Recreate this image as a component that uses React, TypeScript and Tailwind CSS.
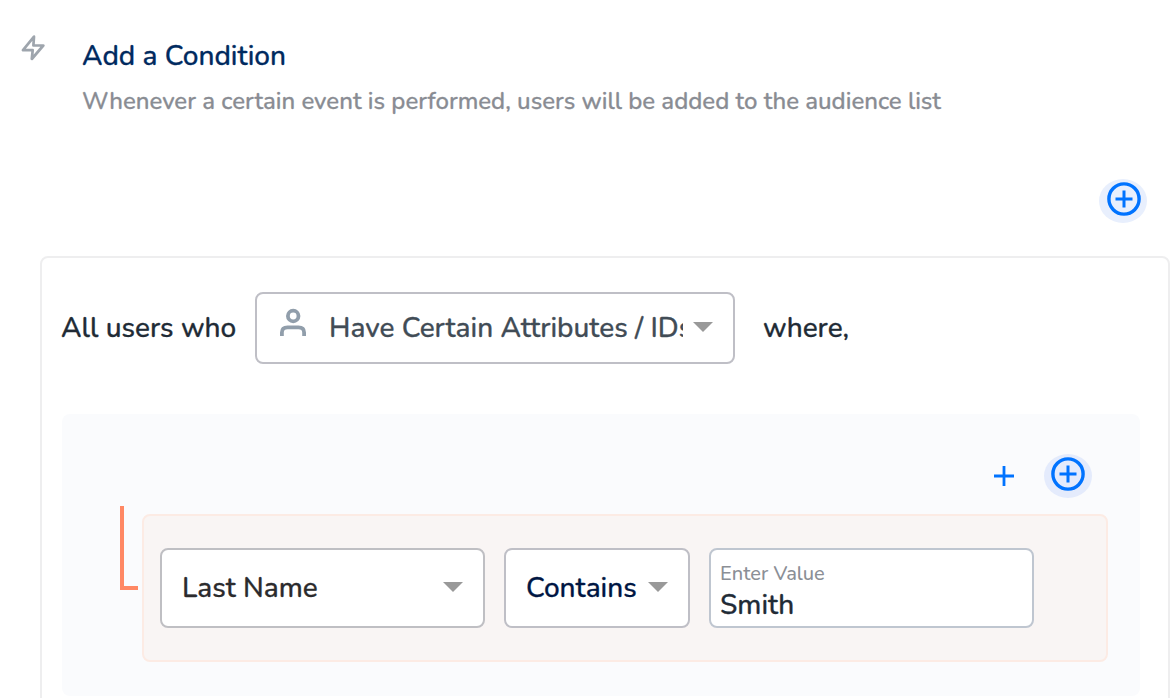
import type { ReactNode } from 'react';

function Caret() {
  return (
    <svg className="mb-0.5 block h-[10px] w-5 shrink-0" viewBox="0 0 20 10">
      <path d="M0 0H20L10 10Z" fill="#999999" />
    </svg>
  );
}

function AddButton({ className }: { className: string }) {
  return (
    <button className={`flex h-11 w-12 shrink-0 justify-center rounded-[50%] pt-[3px] ${className}`}>
      <svg className="block h-[34px] w-[34px]" viewBox="0 0 34 34" fill="none" stroke="#0073ff">
        <circle cx="17" cy="17" r="15.1" strokeWidth="3.4" />
        <path d="M17 8.5V25.5M8.5 17H25.5" strokeWidth="3" />
      </svg>
    </button>
  );
}

function Field({ className, children }: { className: string; children: ReactNode }) {
  return <div className={`flex shrink-0 rounded-lg border-2 bg-white ${className}`}>{children}</div>;
}

export default function App() {
  return (
    <main className="flex h-[698px] w-[1170px] flex-col overflow-hidden bg-white font-['Nunito','Lato',sans-serif] text-[28px] leading-9 font-medium whitespace-nowrap text-[#212b36] [-webkit-text-stroke:0.3px]">
      <header className="flex h-[179px] shrink-0 pl-[21px]">
        <svg className="mt-[35px] block h-[26px] w-6 shrink-0" viewBox="0 0 24 26" fill="none" stroke="#9ea5ad" strokeWidth="2.7" strokeLinejoin="round">
          <path d="M13 1.7L2 15.2H11.7L10.8 24L22.3 10.5H12.4Z" />
        </svg>
        <div className="pt-[38px] pl-[37px]">
          <h1 className="text-[#002a5f]">Add a Condition</h1>
          <p className="mt-[9px] text-2xl leading-9 text-[#898c93]">
            Whenever a certain event is performed, users will be added to the audience list
          </p>
        </div>
      </header>

      <div className="flex h-[77px] shrink-0 justify-end pr-[23px]">
        <AddButton className="bg-[#e8effd] pl-px" />
      </div>

      <section className="ml-10 h-[460px] shrink-0 rounded-lg border-2 border-[#eeeeef] px-5 pt-[34px]">
        <div className="flex h-[72px] items-center">
          <span className="-ml-px w-[194px]">All users who</span>
          <Field className="h-[72px] w-[480px] items-center border-[#bfbfc6] pr-5 pl-[22px]">
            <svg className="mb-[11px] block h-[30px] w-7 shrink-0" viewBox="0 0 28 30" fill="none" stroke="#919eab" strokeWidth="3.8">
              <circle cx="14.2" cy="8" r="5.3" />
              <path d="M2.9 28V24.5Q2.9 19.3 8.6 19.3H19.4Q25.1 19.3 25.1 24.5V28" strokeLinecap="butt" />
            </svg>
            <span className="ml-[22px] w-[354px] overflow-hidden text-[#414c56]">Have Certain Attributes / IDs</span>
            <span className="ml-[10px]"><Caret /></span>
          </Field>
          <span className="ml-7">where,</span>
        </div>

        <div className="mt-[50px] mr-2 h-[282px] rounded-lg bg-[#fafbfd] pt-10">
          <div className="flex h-[52px] items-start justify-end pr-12">
            <svg className="mt-3 mr-[30px] block h-5 w-5" viewBox="0 0 20 20" stroke="#0073ff" strokeWidth="2.8">
              <path d="M10 0V20M0 10H20" />
            </svg>
            <AddButton className="bg-[#e4ebfc]" />
          </div>
          <div className="flex h-[156px] pl-[58px]">
            <div className="h-[84px] w-[18px] shrink-0 border-b-4 border-l-4 border-[#ff8864]" />
            <div className="mt-2 ml-1 flex h-[148px] w-[966px] items-center gap-[19px] rounded-lg border-2 border-[#fcebe4] bg-[#f9f5f4] px-4">
              <Field className="h-20 w-[325px] items-center justify-between border-[#bfbfc3] px-5 text-[#2b2b2d]">
                <span>Last Name</span>
                <Caret />
              </Field>
              <Field className="h-20 w-[186px] items-center justify-between border-[#bfbfc6] px-5 text-[#001643]">
                <span>Contains</span>
                <Caret />
              </Field>
              <Field className="h-20 w-[325px] flex-col border-[#bfc6d0] px-[9px] pt-[11px]">
                <label className="text-xl leading-[26px] text-[#8b8f96] [-webkit-text-stroke:0px]">Enter Value</label>
                <span>Smith</span>
              </Field>
            </div>
          </div>
        </div>
      </section>
    </main>
  );
}
